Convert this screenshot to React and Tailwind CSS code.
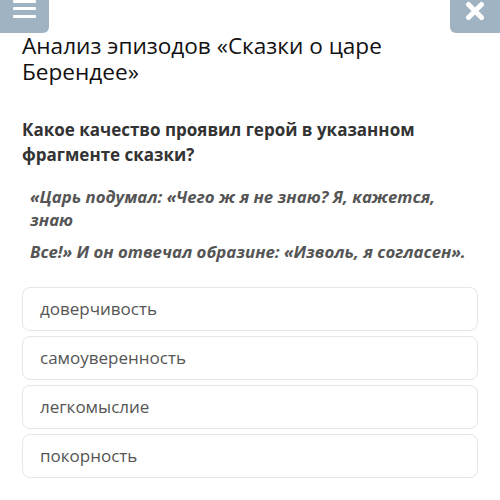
export default function App() {
  const options = ["доверчивость", "самоуверенность", "легкомыслие", "покорность"];
  return (
    <div className="w-[500px] h-[500px] bg-white overflow-hidden" style={{ fontFamily: '"Open Sans", "Noto Sans", sans-serif' }}>
      <div className="flex justify-between h-[33px]">
        <div className="w-[49px] h-[33px] bg-[#a0b3c2] rounded-br-[6px] relative">
          <div className="absolute left-[13px] top-[0px] w-[23px] h-[3px] bg-white rounded-[1px]" />
          <div className="absolute left-[13px] top-[7px] w-[23px] h-[3px] bg-white rounded-[1px]" />
          <div className="absolute left-[13px] top-[15px] w-[23px] h-[3px] bg-white rounded-[1px]" />
        </div>
        <div className="w-[50px] h-[33px] bg-[#a0b3c2] rounded-bl-[6px] flex justify-center pt-[1px]">
          <svg width="20" height="20" viewBox="0 0 20 20">
            <path d="M3.5 3.5 L16.5 16.5 M16.5 3.5 L3.5 16.5" stroke="white" strokeWidth="5" strokeLinecap="round" />
          </svg>
        </div>
      </div>
      <div className="px-[22px]">
        <h1 className="text-[22.6px] leading-[26px] text-[#111] font-normal w-[440px]">
          Анализ эпизодов «Сказки о царе Берендее»
        </h1>
        <p className="mt-[32px] text-[17px] leading-[25px] font-bold text-[#333]">
          Какое качество проявил герой в указанном фрагменте сказки?
        </p>
        <div className="mt-[18px] pl-[8px] w-[448px] text-[16.8px] leading-[23px] font-bold italic text-[#555]">
          <p>«Царь подумал: «Чего ж я не знаю? Я, кажется, знаю</p>
          <p className="mt-[9px]">Все!» И он отвечал образине: «Изволь, я согласен».</p>
        </div>
        <div className="mt-[24px] flex flex-col gap-[5px] w-[456px]">
          {options.map((o) => (
            <div key={o} className="h-[44px] border border-[#e6e6e6] rounded-[8px] flex items-center pl-[17px] text-[17px] text-[#555]">
              {o}
            </div>
          ))}
        </div>
      </div>
    </div>
  );
}
